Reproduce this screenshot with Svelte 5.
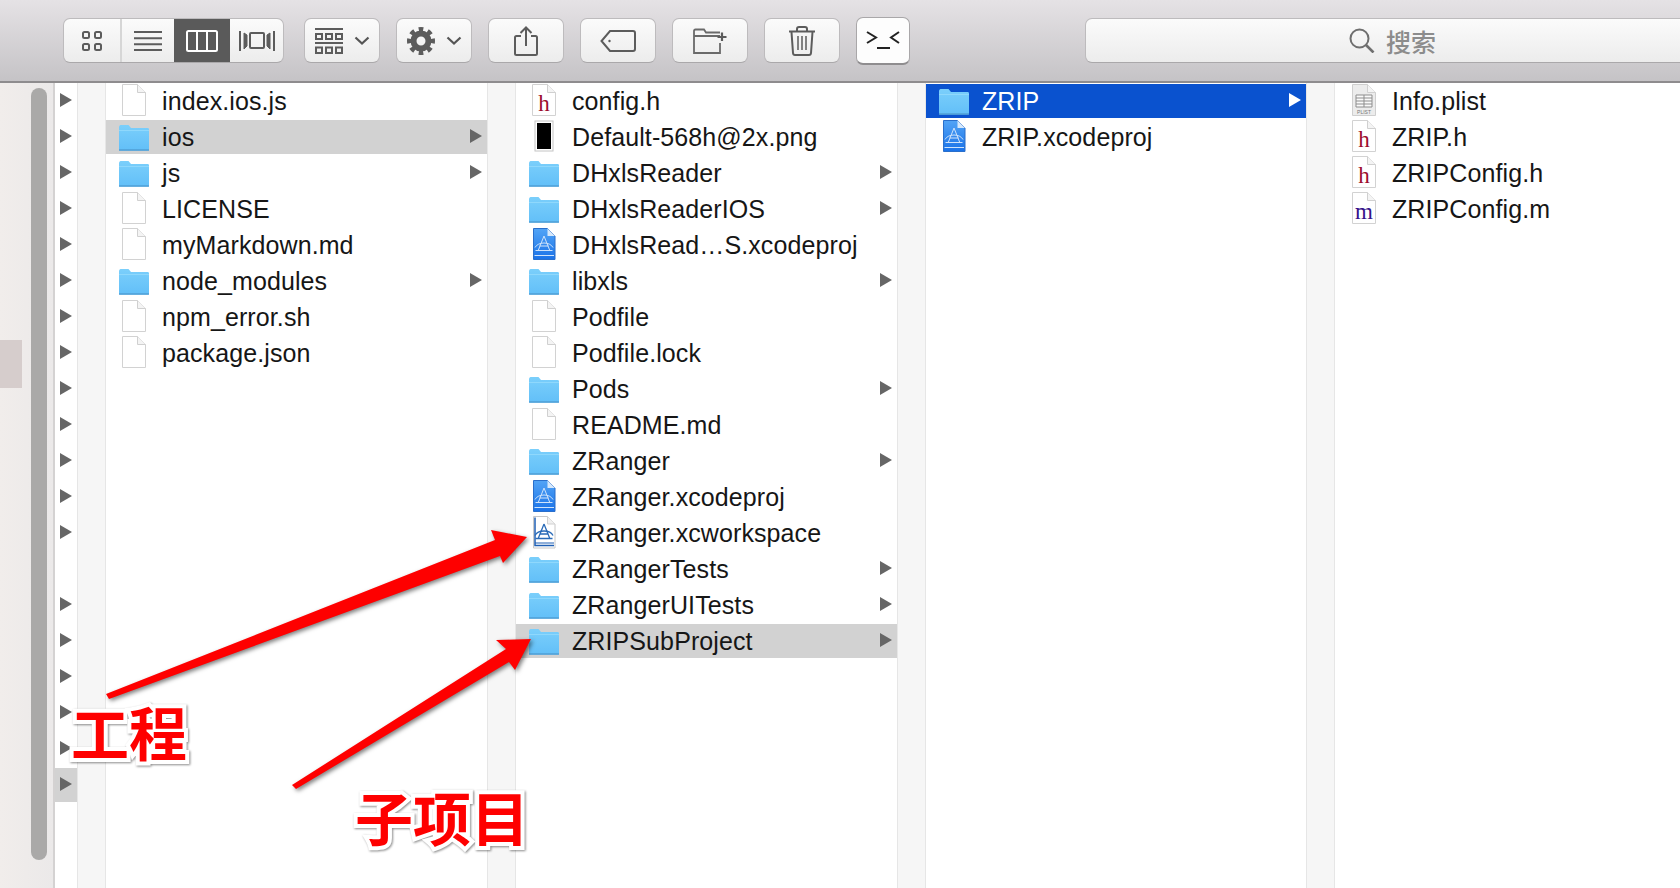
<script>
  // narrow column: 20 rows, row 13 is a plain file so it has no arrow
  const narrow = Array.from({ length: 20 }, (_, i) => ({
    arrow: i !== 13,
    selected: i === 19
  }));

  const columns = [
    {
      cls: "c1",
      rows: [
        { name: "index.ios.js", icon: "file" },
        { name: "ios", icon: "folder", state: "grey" },
        { name: "js", icon: "folder" },
        { name: "LICENSE", icon: "file" },
        { name: "myMarkdown.md", icon: "file" },
        { name: "node_modules", icon: "folder" },
        { name: "npm_error.sh", icon: "file" },
        { name: "package.json", icon: "file" }
      ]
    },
    {
      cls: "c2",
      rows: [
        { name: "config.h", icon: "h" },
        { name: "Default-568h@2x.png", icon: "png" },
        { name: "DHxlsReader", icon: "folder" },
        { name: "DHxlsReaderIOS", icon: "folder" },
        { name: "DHxlsRead…S.xcodeproj", icon: "xcode" },
        { name: "libxls", icon: "folder" },
        { name: "Podfile", icon: "file" },
        { name: "Podfile.lock", icon: "file" },
        { name: "Pods", icon: "folder" },
        { name: "README.md", icon: "file" },
        { name: "ZRanger", icon: "folder" },
        { name: "ZRanger.xcodeproj", icon: "xcode" },
        { name: "ZRanger.xcworkspace", icon: "workspace" },
        { name: "ZRangerTests", icon: "folder" },
        { name: "ZRangerUITests", icon: "folder" },
        { name: "ZRIPSubProject", icon: "folder", state: "grey" }
      ]
    },
    {
      cls: "c3",
      rows: [
        { name: "ZRIP", icon: "folder", state: "blue" },
        { name: "ZRIP.xcodeproj", icon: "xcode" }
      ]
    },
    {
      cls: "c4",
      rows: [
        { name: "Info.plist", icon: "plist" },
        { name: "ZRIP.h", icon: "h" },
        { name: "ZRIPConfig.h", icon: "h" },
        { name: "ZRIPConfig.m", icon: "m" }
      ]
    }
  ];
</script>

{#snippet sheet(fill, edge)}
  <path d="M3.5 .5H18.5L26.5 8.5V31.5H3.5Z" fill={fill} stroke={edge} />
  <path d="M18.5 .5V8.5H26.5" fill="#f4f4f4" stroke="#d0d0d0" />
{/snippet}

{#snippet appGlyph(color, w)}
  <g fill="none" stroke={color} stroke-width={w}>
    <path d="M15 8 9 23M15 8 21 23M6.500 22.500H23.500M10.500 18H19.500" />
    <path d="M6 19.500C9 13.500 21 13.500 24 19.500" />
  </g>
{/snippet}

{#snippet fileIcon(kind)}
  {#if kind === "folder"}
    <svg class="ico" viewBox="0 0 30 34">
      <defs>
        <linearGradient id="fold" x1="0" y1="0" x2="0" y2="1">
          <stop offset="0" stop-color="#7bcffb" />
          <stop offset="1" stop-color="#62bff8" />
        </linearGradient>
      </defs>
      <path d="M0 7.5C0 5.5 1 5 2.500 5H9.500L12 8H28.500C29.500 8 30 8.500 30 9.500V29C30 30 29.500 30.500 28.500 30.500H1.500C.5 30.500 0 30 0 29Z" fill="url(#fold)" />
      <path d="M0 10.500H30" stroke="#8fd8fc" />
      <path d="M0 30H30" stroke="#4f9fd6" stroke-width="1.500" />
    </svg>
  {:else if kind === "png"}
    <svg class="ico" viewBox="0 0 30 34">
      <rect x="6" y="1" width="18" height="30" fill="#fff" stroke="#c4c4c4" />
      <rect x="8" y="3" width="14" height="26" fill="#000" />
    </svg>
  {:else if kind === "xcode"}
    <svg class="ico" viewBox="0 0 30 34">
      <defs>
        <linearGradient id="proj" x1="0" y1="0" x2="0" y2="1">
          <stop offset="0" stop-color="#52a4f6" />
          <stop offset="1" stop-color="#1a72e8" />
        </linearGradient>
      </defs>
      <path d="M4.500 .5H18.500L26 8V31.500H4.500Z" fill="url(#proj)" stroke="#2a6fcb" />
      <path d="M18.500 .5V8H26Z" fill="#d6e8fb" />
      <path d="M5.500 27.500H25" stroke="#cfe3fa" />
      {@render appGlyph("#cfe3fb", 1)}
    </svg>
  {:else if kind === "workspace"}
    <svg class="ico" viewBox="0 0 30 34">
      <path d="M4.500 .5H18.500L26 8V32H4.500Z" fill="#fff" stroke="#c8c8c8" />
      <path d="M6 1.500V29.500H25" fill="none" stroke="#1f5fb4" stroke-width="1.500" />
      <path d="M6 27H25" stroke="#1f5fb4" />
      <path d="M18.500 .5V8H26" fill="#f0f0f0" stroke="#d0d0d0" />
      {@render appGlyph("#2a6bb8", 1.300)}
    </svg>
  {:else if kind === "plist"}
    <svg class="ico" viewBox="0 0 30 34">
      {@render sheet("#ececec", "#cfcfcf")}
      <path d="M7 11H23V23H7Z" fill="#fafafa" stroke="#8d8d8d" />
      <path d="M7 14H23M7 17H23M7 20H23M15 11V23" stroke="#8d8d8d" />
      <text class="plist-label" x="15" y="29.500" text-anchor="middle">PLIST</text>
    </svg>
  {:else}
    <svg class="ico" viewBox="0 0 30 34">
      {@render sheet("#fff", "#d2d2d2")}
      {#if kind === "h"}
        <text class="letter" x="15" y="27" fill="#9c0d2e" text-anchor="middle">h</text>
      {:else if kind === "m"}
        <text class="letter" x="15" y="27" fill="#35128a" text-anchor="middle">m</text>
      {/if}
    </svg>
  {/if}
{/snippet}

{#snippet chevron()}
  <svg class="chev" viewBox="0 0 16 9">
    <path d="M1.500 1.500 8 7.500 14.500 1.500" fill="none" stroke="#555" stroke-width="2.200" />
  </svg>
{/snippet}

<div class="window">
  <header class="toolbar">
    <div class="views">
      <div class="seg first">
        <svg width="20" height="20" viewBox="0 0 20 20" fill="none" stroke="#5c5c5c" stroke-width="2">
          <rect x="1" y="1" width="6" height="6" rx="1.500" />
          <rect x="13" y="1" width="6" height="6" rx="1.500" />
          <rect x="1" y="13" width="6" height="6" rx="1.500" />
          <rect x="13" y="13" width="6" height="6" rx="1.500" />
        </svg>
      </div>
      <div class="seg">
        <svg width="28" height="20" viewBox="0 0 28 20" stroke="#5c5c5c" stroke-width="2">
          <path d="M0 1H28M0 7.300H28M0 13.300H28M0 19H28" />
        </svg>
      </div>
      <div class="seg on">
        <svg width="32" height="22" viewBox="0 0 32 22" fill="none" stroke="#fff" stroke-width="2">
          <rect x="1" y="1" width="30" height="20" rx="1.500" />
          <path d="M11 1V21M21 1V21" />
        </svg>
      </div>
      <div class="seg last">
        <svg width="36" height="22" viewBox="0 0 36 22" fill="none" stroke="#5c5c5c">
          <rect x="11" y="3" width="14" height="15" rx="1" stroke-width="2" />
          <path d="M1 1V21" stroke-width="2" />
          <path d="M35 1V21" stroke-width="2" />
          <path d="M5 3 8 5V16L5 19Z" fill="#5c5c5c" />
          <path d="M31 3 28 5V16L31 19Z" fill="#5c5c5c" />
        </svg>
      </div>
    </div>

    <div class="btn">
      <svg width="28" height="26" viewBox="0 0 28 26" fill="none" stroke="#5c5c5c" stroke-width="2">
        <path d="M0 1H28M0 15H28" />
        <rect x="1" y="6" width="6" height="5" />
        <rect x="11" y="6" width="6" height="5" />
        <rect x="21" y="6" width="6" height="5" />
        <rect x="1" y="19.500" width="6" height="5.500" />
        <rect x="11" y="19.500" width="6" height="5.500" />
        <rect x="21" y="19.500" width="6" height="5.500" />
      </svg>
      {@render chevron()}
    </div>
    <div class="btn">
      <svg width="28" height="28" viewBox="0 0 28 28" fill="none" stroke="#5c5c5c">
        <circle cx="14" cy="14" r="7.500" stroke-width="6" />
        <circle cx="14" cy="14" r="11.500" stroke-width="5" pathLength="16" stroke-dasharray="1 1" stroke-dashoffset="0.500" />
      </svg>
      {@render chevron()}
    </div>
    <div class="btn">
      <svg width="24" height="30" viewBox="0 0 24 30" fill="none" stroke="#5c5c5c" stroke-width="2">
        <path d="M7 10H2.500C1.500 10 1 10.500 1 11.500V27.500C1 28.500 1.500 29 2.500 29H21.500C22.500 29 23 28.500 23 27.500V11.500C23 10.500 22.500 10 21.500 10H17" />
        <path d="M12 20V2M6.500 7 12 1.500 17.500 7" />
      </svg>
    </div>
    <div class="btn">
      <svg width="36" height="22" viewBox="0 0 36 22" fill="none" stroke="#5c5c5c" stroke-width="2">
        <path d="M10 1H33C34.200 1 35 1.800 35 3V19C35 20.200 34.200 21 33 21H10L1.500 11Z" />
        <circle cx="9.500" cy="11" r="1.200" fill="#5c5c5c" stroke="none" />
      </svg>
    </div>
    <div class="btn">
      <svg width="34" height="26" viewBox="0 0 34 26" fill="none" stroke="#6a6a6a" stroke-width="1.800">
        <path d="M1 8V3C1 2 1.500 1.500 2.500 1.500H11L13 4.500H27" />
        <path d="M1 8H27M1 8V25H27V15" />
        <path d="M29 4.500V13M24.500 9H33.500" stroke="#5c5c5c" stroke-width="2.200" />
      </svg>
    </div>
    <div class="btn">
      <svg width="28" height="30" viewBox="0 0 28 30" fill="none" stroke="#5c5c5c" stroke-width="2">
        <path d="M1 5.500H27" />
        <path d="M9 5V3C9 2 10 1 11 1H17C18 1 19 2 19 3V5" />
        <path d="M3.500 6 5 27C5.100 28.200 6 29 7 29H21C22 29 22.900 28.200 23 27L24.500 6" />
        <path d="M10 10V24M14 10V24M18 10V24" stroke-width="1.500" />
      </svg>
    </div>
    <div class="btn term">
      <svg width="34" height="18" viewBox="0 0 34 18" fill="none" stroke="#222" stroke-width="2">
        <path d="M1 1 10 6.500 1 12" />
        <path d="M11 17H24" />
        <path d="M33 1 25 6.500 33 12" />
      </svg>
    </div>

    <div class="search">
      <svg width="26" height="25" viewBox="0 0 26 25" fill="none" stroke="#6f6f6f">
        <circle cx="10.500" cy="10.500" r="9" stroke-width="2" />
        <path d="M17 17 24.500 24.500" stroke-width="2.600" />
      </svg>
      <span>搜索</span>
    </div>
  </header>

  <main class="browser">
    <div class="side">
      <div class="patch"></div>
      <div class="thumb"></div>
    </div>
    <div class="narrow">
      {#each narrow as n}
        <div class="nrow" class:grey={n.selected}>
          {#if n.arrow}<i class="tri"></i>{/if}
        </div>
      {/each}
    </div>
    <div class="gutter"></div>

    {#each columns as col, i}
      <section class="col {col.cls}">
        {#each col.rows as row}
          <div class="row {row.state ?? ''}">
            <div class="icon-cell">{@render fileIcon(row.icon)}</div>
            <span class="name">{row.name}</span>
            {#if row.icon === "folder"}<i class="tri"></i>{/if}
          </div>
        {/each}
      </section>
      {#if i < columns.length - 1}
        <div class="gutter"></div>
      {/if}
    {/each}
  </main>

  <!-- annotations drawn on top of the screenshot -->
  <svg class="arrows" viewBox="0 0 1680 888">
    <polygon points="106,694 495,540 491,530 527,537 503,563 500,556 109,699" fill="#fe0000" />
    <polygon points="292,785 506,649 496,640 531,639 515,670 509,662 296,789" fill="#fe0000" />
  </svg>
  <span class="note n1">工程</span>
  <span class="note n2">子项目</span>
</div>

<style>
  :global(body) {
    margin: 0;
    background: #fff;
    overflow: hidden;
  }

  .window {
    position: relative;
    width: 1680px;
    height: 888px;
    overflow: hidden;
    display: flex;
    flex-direction: column;
    font-family: "Liberation Sans", Arial, sans-serif;
    color: #161616;
  }

  .toolbar {
    height: 81px;
    flex: none;
    display: flex;
    align-items: center;
    gap: 16px;
    padding-left: 63px;
    background: linear-gradient(#e5e2e5, #c5c3c6);
    border-bottom: 2px solid #8e8c8e;
    overflow: hidden;
  }

  .views,
  .btn,
  .search {
    height: 45px;
    flex: none;
    box-sizing: border-box;
    border: 1px solid #bdbbbd;
    border-bottom-color: #aaa8aa;
    border-radius: 7px;
    background: linear-gradient(#fbfbfb, #ececec);
  }

  .views {
    width: 221px;
    display: flex;
    margin-right: 4px;
    overflow: hidden;
  }

  .seg {
    box-sizing: border-box;
    display: flex;
    align-items: center;
    justify-content: center;
    width: 52px;
  }

  .seg.first {
    width: 58px;
    border-right: 2px solid #d6d6d6;
  }

  .seg.on {
    width: 56px;
    background: #5a5a5a;
  }

  .seg.last {
    flex: 1;
  }

  .btn {
    width: 76px;
    display: flex;
    align-items: center;
    justify-content: center;
    gap: 11px;
  }

  .chev {
    width: 16px;
    height: 9px;
  }

  .term {
    width: 54px;
    height: 48px;
    background: #fdfdfd;
    border-color: #a9a7a9;
    border-bottom: 2px solid #8f8d8f;
  }

  .search {
    width: 615px;
    margin-left: 159px;
    display: flex;
    align-items: center;
    justify-content: center;
    gap: 11px;
    font-family: "Noto Sans CJK SC", sans-serif;
    font-weight: 500;
    font-size: 25px;
    color: #8c8c8c;
  }

  .browser {
    flex: 1;
    min-height: 0;
    display: flex;
  }

  .side {
    position: relative;
    width: 53px;
    flex: none;
    background: linear-gradient(90deg, #f1edeb, #ebe9e9);
    border-right: 2px solid #d4d2d2;
  }

  .patch {
    position: absolute;
    left: 0;
    top: 257px;
    width: 22px;
    height: 48px;
    background: #d6cdcc;
  }

  .thumb {
    position: absolute;
    left: 31px;
    top: 5px;
    width: 16px;
    height: 772px;
    border-radius: 8px;
    background: #aaa9a8;
  }

  .narrow {
    width: 22px;
    flex: none;
    padding-top: 1px;
    box-sizing: border-box;
  }

  .nrow {
    height: 34px;
    margin-bottom: 2px;
    display: flex;
    align-items: center;
    padding-left: 5px;
  }

  .nrow .tri {
    margin-top: -2px;
  }

  .nrow.grey {
    background: #d2d2d2;
  }

  .gutter {
    width: 27px;
    flex: none;
    background: #f6f6f6;
    border-left: 1px solid #e6e6e6;
    border-right: 1px solid #e6e6e6;
  }

  .col {
    flex: none;
    padding-top: 1px;
    box-sizing: border-box;
  }

  .c1 {
    width: 381px;
  }

  .c2 {
    width: 381px;
  }

  .c3 {
    width: 380px;
  }

  .c4 {
    flex: 1;
    padding-left: 1px;
  }

  .row {
    height: 34px;
    margin-bottom: 2px;
    display: flex;
    align-items: center;
    position: relative;
  }

  .row.grey {
    background: #d2d2d2;
  }

  .row.blue {
    background: #0a52cf;
    color: #fff;
  }

  .icon-cell {
    width: 56px;
    flex: none;
    display: flex;
    justify-content: center;
  }

  .ico {
    width: 30px;
    height: 34px;
    display: block;
  }

  .name {
    font-size: 25px;
    line-height: 34px;
    letter-spacing: 0.1px;
    white-space: nowrap;
  }

  .tri {
    display: block;
    width: 0;
    height: 0;
    border-left: 12px solid #666;
    border-top: 7.500px solid transparent;
    border-bottom: 7.500px solid transparent;
  }

  .row .tri {
    position: absolute;
    right: 5px;
    top: 9px;
  }

  .row.blue .tri {
    border-left-color: #fff;
  }

  .letter {
    font-family: "Liberation Serif", serif;
    font-size: 23px;
  }

  .plist-label {
    font-family: "Liberation Sans", sans-serif;
    font-size: 5px;
    fill: #777;
  }

  .arrows {
    position: absolute;
    inset: 0;
    width: 1680px;
    height: 888px;
    filter: drop-shadow(2px 2px 2px rgba(0, 0, 0, 0.5));
    pointer-events: none;
  }

  .note {
    position: absolute;
    font-family: "Noto Sans CJK SC", sans-serif;
    font-weight: 700;
    font-size: 58px;
    line-height: 1;
    color: #fe0000;
    -webkit-text-stroke: 8px #fff;
    paint-order: stroke fill;
    filter: drop-shadow(1px 1px 1px rgba(0, 0, 0, 0.45));
  }

  .n1 {
    left: 71px;
    top: 702px;
  }

  .n2 {
    left: 355px;
    top: 787px;
  }
</style>
